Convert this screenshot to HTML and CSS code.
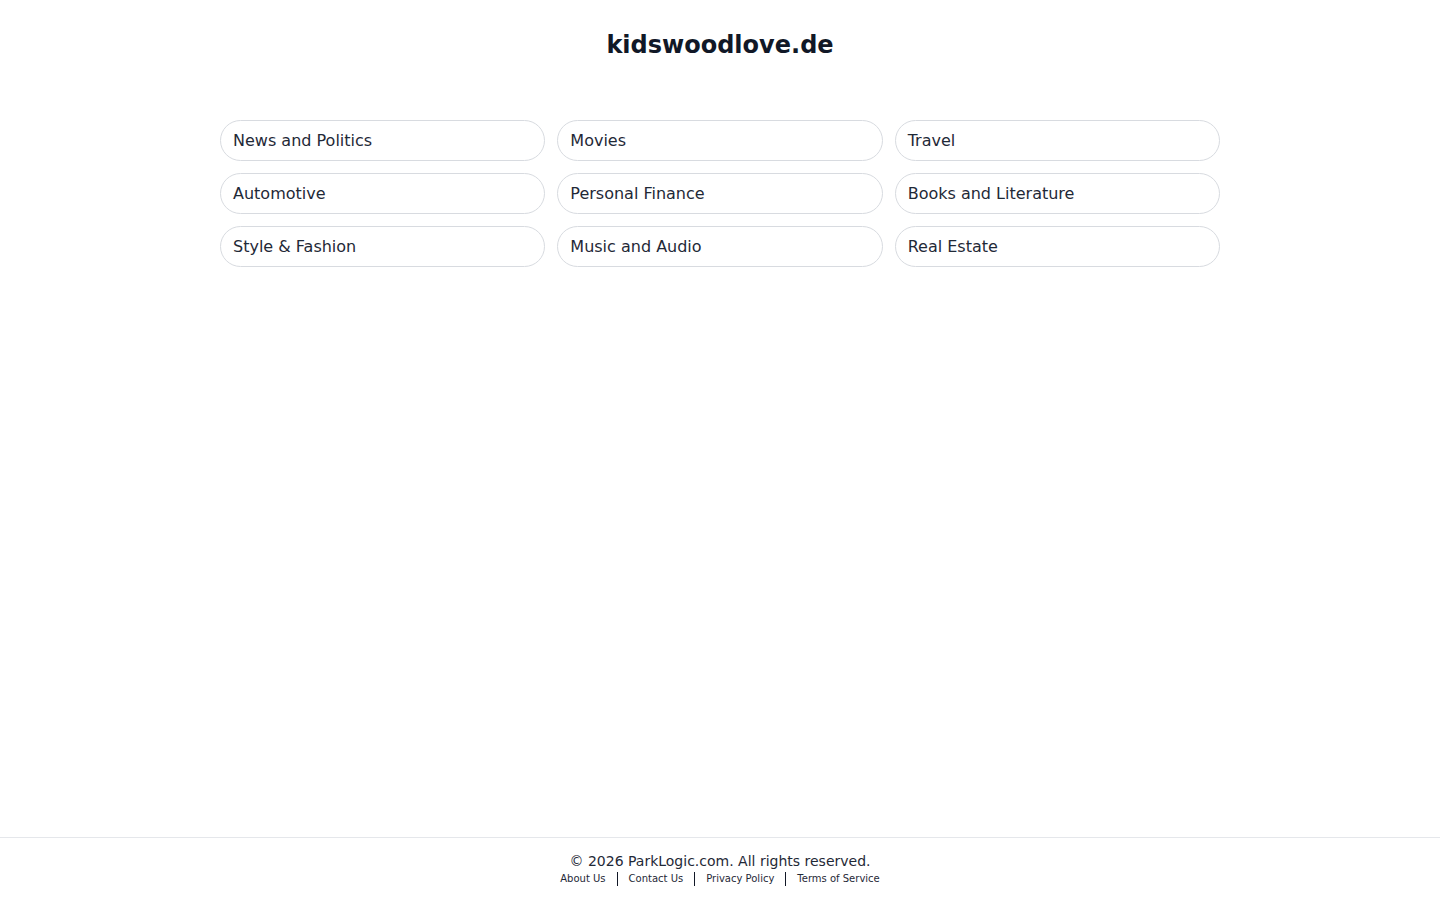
FILE: index.html
```html
<!DOCTYPE html>
<html lang="en">
<head>
    <meta charset="UTF-8">
    <meta name="viewport" content="width=device-width, initial-scale=1.0">
    <title>kidswoodlove.de</title>
    <link rel="stylesheet" href="styles.css">
</head>
<body>
    <!-- Domain title -->
    <header class="site-header">
        <h1 class="domain">kidswoodlove.de</h1>
    </header>

    <!-- Related searches -->
    <main class="content">
        <div class="topics">
            <a class="topic" href="#">News and Politics</a>
            <a class="topic" href="#">Movies</a>
            <a class="topic" href="#">Travel</a>
            <a class="topic" href="#">Automotive</a>
            <a class="topic" href="#">Personal Finance</a>
            <a class="topic" href="#">Books and Literature</a>
            <a class="topic" href="#">Style &amp; Fashion</a>
            <a class="topic" href="#">Music and Audio</a>
            <a class="topic" href="#">Real Estate</a>
        </div>
    </main>

    <footer class="site-footer">
        <p class="copyright">&copy; 2026 ParkLogic.com. All rights reserved.</p>
        <nav class="footer-links">
            <a href="#">About Us</a>
            <a href="#">Contact Us</a>
            <a href="#">Privacy Policy</a>
            <a href="#">Terms of Service</a>
        </nav>
    </footer>
</body>
</html>
```

FILE: styles.css
```css
* {
    margin: 0;
    padding: 0;
    box-sizing: border-box;
}

body {
    background-color: #fff;
    color: #1f2937;
    font-family: "DejaVu Sans", sans-serif;
    display: flex;
    flex-direction: column;
    min-height: 100vh;
}

.site-header {
    padding-top: 29px;
    text-align: center;
}

.domain {
    font-size: 24px;
    line-height: 32px;
    font-weight: bold;
    color: #111827;
}

.content {
    flex: 1;
    padding-top: 59px;
}

/* Topic pills */
.topics {
    width: 1000px;
    margin: 0 auto;
    display: grid;
    grid-template-columns: repeat(3, 1fr);
    gap: 12px;
}

.topic {
    display: block;
    padding: 10px 12px;
    line-height: 19px;
    font-size: 16px;
    color: #1f2937;
    text-decoration: none;
    border: 1px solid #d8dbe0;
    border-radius: 21px;
}

/* Footer */
.site-footer {
    border-top: 1px solid #e5e7eb;
    padding: 15px 0 14px;
    text-align: center;
}

.copyright {
    font-size: 14px;
    line-height: 17px;
    color: #1f2937;
}

.footer-links {
    display: flex;
    justify-content: center;
    margin-top: 2px;
}

.footer-links a {
    font-size: 10px;
    line-height: 14px;
    color: #1f2937;
    text-decoration: none;
    padding: 0 11px;
}

.footer-links a + a {
    border-left: 1px solid #111827;
}
```
